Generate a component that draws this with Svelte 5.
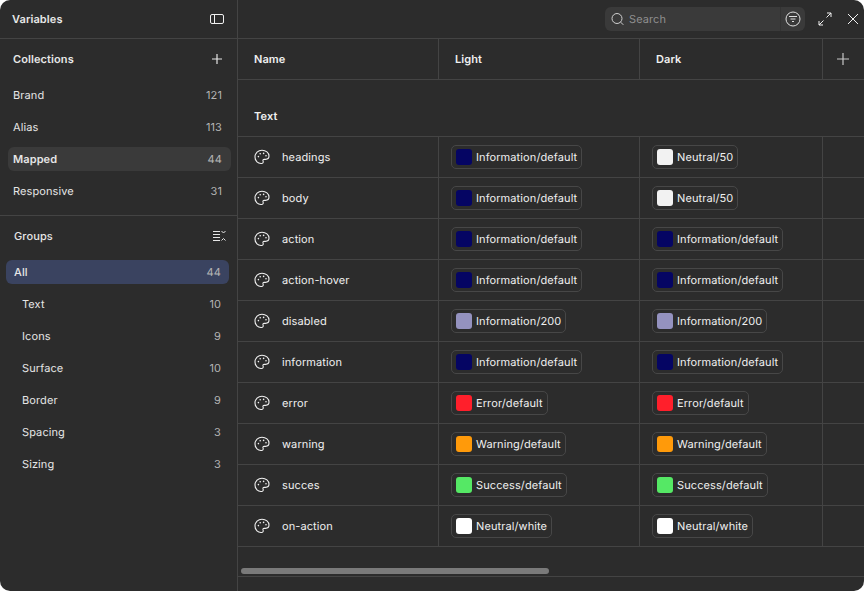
<script>
  const collections = [
    { name: 'Brand', count: 121 },
    { name: 'Alias', count: 113 },
    { name: 'Mapped', count: 44, active: true },
    { name: 'Responsive', count: 31 }
  ]
  const groups = [
    { name: 'Text', count: 10 },
    { name: 'Icons', count: 9 },
    { name: 'Surface', count: 10 },
    { name: 'Border', count: 9 },
    { name: 'Spacing', count: 3 },
    { name: 'Sizing', count: 3 }
  ]
  const info = { color: '#050563', label: 'Information/default' }
  const info200 = { color: '#9492bf', label: 'Information/200' }
  const neutral50 = { color: '#f2f2f2', label: 'Neutral/50' }
  const err = { color: '#ff1f2b', label: 'Error/default' }
  const warn = { color: '#ff9a0a', label: 'Warning/default' }
  const ok = { color: '#55e865', label: 'Success/default' }
  const white = { color: '#ffffff', label: 'Neutral/white' }
  const rows = [
    { name: 'headings', light: info, dark: neutral50 },
    { name: 'body', light: info, dark: neutral50 },
    { name: 'action', light: info, dark: info },
    { name: 'action-hover', light: info, dark: info },
    { name: 'disabled', light: info200, dark: info200 },
    { name: 'information', light: info, dark: info },
    { name: 'error', light: err, dark: err },
    { name: 'warning', light: warn, dark: warn },
    { name: 'succes', light: ok, dark: ok },
    { name: 'on-action', light: white, dark: white }
  ]
</script>

{#snippet chip(token)}
  <div class="chip">
    <span class="swatch" style="background: {token.color}"></span>
    <span>{token.label}</span>
  </div>
{/snippet}

<div class="window">
  <aside class="sidebar">
    <div class="title-bar">
      <span class="title">Variables</span>
      <svg width="16" height="12" viewBox="0 0 16 12" fill="none" stroke="#f0f0f0" stroke-width="1">
        <rect x="1.5" y="1.5" width="13" height="9" rx="1.5" />
        <path d="M5.5 1.5v9" />
      </svg>
    </div>

    <section class="collections">
      <div class="section-head">
        <span class="section-title">Collections</span>
        <svg width="12" height="12" viewBox="0 0 12 12" stroke="#e6e6e6" stroke-width="1.2">
          <path d="M6 1v10M1 6h10" />
        </svg>
      </div>
      <div class="list">
        {#each collections as item}
          <div class="item" class:active={item.active}>
            <span>{item.name}</span>
            <span class="count">{item.count}</span>
          </div>
        {/each}
      </div>
    </section>

    <section class="groups">
      <div class="section-head groups-head">
        <span class="groups-title">Groups</span>
        <svg width="14" height="12" viewBox="0 0 14 12" fill="none" stroke="#e6e6e6" stroke-width="1">
          <path d="M1 1.5h7M1 4.500h7M1 7.500h7M1 10.500h7M9.500 1l2 2 2-2M9.500 10.500l2-2 2 2" />
        </svg>
      </div>
      <div class="list">
        <div class="item selected"><span>All</span><span class="count">44</span></div>
        {#each groups as item}
          <div class="item nested">
            <span>{item.name}</span>
            <span class="count">{item.count}</span>
          </div>
        {/each}
      </div>
    </section>
  </aside>

  <main class="content">
    <div class="toolbar">
      <div class="search">
        <div class="search-field">
          <svg width="14" height="14" viewBox="0 0 14 14" fill="none" stroke="#d0d0d0" stroke-width="1">
            <circle cx="6" cy="6.500" r="5" />
            <path d="M9.700 10.200l2.600 2.600" />
          </svg>
          <span>Search</span>
        </div>
        <div class="search-filter">
          <svg width="16" height="16" viewBox="0 0 16 16" fill="none" stroke="#e0e0e0" stroke-width="1">
            <circle cx="8" cy="8" r="7" />
            <path d="M4 5.500h8M5.500 8h5M7 10.500h2" />
          </svg>
        </div>
      </div>
      <svg class="expand" width="14" height="14" viewBox="0 0 14 14" fill="none" stroke="#f0f0f0" stroke-width="1">
        <path d="M8.500 5.500L13 1M9 1h4v4M5.500 8.500L1 13M1 9v4h4" />
      </svg>
      <svg class="close" width="12" height="12" viewBox="0 0 12 12" fill="none" stroke="#f0f0f0" stroke-width="1">
        <path d="M1 1l10 10M11 1L1 11" />
      </svg>
    </div>

    <div class="table">
      <div class="row head">
        <div class="cell name-cell">Name</div>
        <div class="cell">Light</div>
        <div class="cell">Dark</div>
        <div class="cell add-cell">
          <svg width="12" height="12" viewBox="0 0 12 12" stroke="#c8c8c8" stroke-width="1.2">
            <path d="M6 0v12M0 6h12" />
          </svg>
        </div>
      </div>
      <div class="group-row">Text</div>
      {#each rows as row}
        <div class="row">
          <div class="cell name-cell var-name">
            <svg width="16" height="16" viewBox="0 0 16 16" fill="none" stroke="#f0f0f0" stroke-width="1.1" stroke-linejoin="round">
              <path d="M8 1.200c3.900 0 7 2.700 7 5.900 0 2-1.600 3.300-3.500 3.300H10.100c-.9 0-1.400.7-1.100 1.500.3.700.4 1 .2 1.500-.2.700-.7 1.100-1.400 1.100C3.900 15 1 11.900 1 8.100 1 4.300 4.100 1.200 8 1.200z" />
              <circle cx="4.400" cy="7.600" r=".8" fill="#f0f0f0" stroke="none" />
              <circle cx="6.200" cy="4.700" r=".8" fill="#f0f0f0" stroke="none" />
              <circle cx="9.600" cy="4.400" r=".8" fill="#f0f0f0" stroke="none" />
              <circle cx="12" cy="6.800" r=".8" fill="#f0f0f0" stroke="none" />
            </svg>
            <span>{row.name}</span>
          </div>
          <div class="cell">{@render chip(row.light)}</div>
          <div class="cell">{@render chip(row.dark)}</div>
          <div class="cell add-cell"></div>
        </div>
      {/each}
      <div class="scroll-track"><div class="scroll-thumb"></div></div>
    </div>
  </main>
</div>

<style>
  :global(body) {
    margin: 0;
    background: #fff;
  }

  .window {
    display: flex;
    width: 864px;
    height: 591px;
    overflow: hidden;
    border-radius: 10px;
    background: #2c2c2c;
    color: #f0f0f0;
    font-family: Inter, "Noto Sans", sans-serif;
    font-size: 11px;
    letter-spacing: 0.1px;
    text-rendering: geometricPrecision;
  }

  .sidebar {
    flex: 0 0 237px;
    border-right: 1px solid #444;
  }

  .title-bar {
    display: flex;
    align-items: center;
    justify-content: space-between;
    height: 38px;
    padding: 0 12px;
    border-bottom: 1px solid #444;
  }

  .title,
  .section-title {
    font-weight: 600;
    color: #e8e8e8;
  }

  .collections {
    padding-bottom: 4px;
    border-bottom: 1px solid #444;
  }

  .section-head {
    display: flex;
    align-items: center;
    justify-content: space-between;
    height: 40px;
    padding: 0 14px 0 13px;
  }

  .list {
    padding: 0 6px 0 8px;
  }

  .collections .list {
    padding-top: 4px;
  }

  .item {
    display: flex;
    align-items: center;
    justify-content: space-between;
    height: 24px;
    margin-bottom: 8px;
    padding: 0 9px 0 5px;
    border-radius: 6px;
    color: #e6e6e6;
  }

  .active {
    background: #3a3a3a;
    font-weight: 600;
  }

  .count {
    color: #b4b4b4;
    font-weight: 400;
  }

  .groups-head {
    padding: 0 11px 0 14px;
  }

  .groups-title {
    color: #e6e6e6;
    font-weight: 500;
  }

  .groups .list {
    padding: 4px 8px 0 6px;
  }

  .selected {
    padding: 0 8px;
    background: #3a4360;
    font-weight: 500;
  }

  .nested {
    padding: 0 8px 0 16px;
  }

  .content {
    flex: 1;
    min-width: 0;
  }

  .toolbar {
    display: flex;
    align-items: center;
    justify-content: flex-end;
    height: 38px;
    border-bottom: 1px solid #444;
  }

  .search {
    display: flex;
    height: 24px;
    border-radius: 6px;
    overflow: hidden;
    background: #3a3a3a;
  }

  .search-field {
    display: flex;
    align-items: center;
    gap: 4px;
    width: 169px;
    padding-left: 6px;
    border-right: 1px solid #333;
    color: #8f8f8f;
  }

  .search-filter {
    display: flex;
    align-items: center;
    justify-content: center;
    width: 24px;
  }

  .expand {
    margin-left: 13px;
  }

  .close {
    margin: 0 5px 0 15px;
  }

  .row {
    display: grid;
    grid-template-columns: 201px 201px 183px 1fr;
    height: 40px;
    border-bottom: 1px solid #444;
  }

  .cell {
    display: flex;
    align-items: center;
    padding-left: 12px;
    border-right: 1px solid #444;
  }

  .head .cell {
    padding-left: 16px;
    font-weight: 600;
  }

  .head .add-cell {
    padding-left: 14px;
  }

  .add-cell {
    border-right: 0;
  }

  .name-cell {
    padding-left: 16px;
  }

  .var-name {
    gap: 12px;
  }

  .group-row {
    display: flex;
    align-items: center;
    height: 57px;
    padding: 15px 0 0 16px;
    box-sizing: border-box;
    border-bottom: 1px solid #444;
    font-weight: 600;
  }

  .chip {
    display: flex;
    align-items: center;
    gap: 4px;
    height: 22px;
    padding: 0 4px;
    border: 1px solid #474747;
    border-radius: 5px;
  }

  .swatch {
    width: 16px;
    height: 16px;
    border-radius: 3px;
  }

  .scroll-track {
    height: 30px;
    padding-top: 21px;
    box-sizing: border-box;
    border-bottom: 1px solid #444;
  }

  .scroll-thumb {
    width: 308px;
    height: 6px;
    margin-left: 3px;
    border-radius: 3px;
    background: #7a7a7a;
  }
</style>
